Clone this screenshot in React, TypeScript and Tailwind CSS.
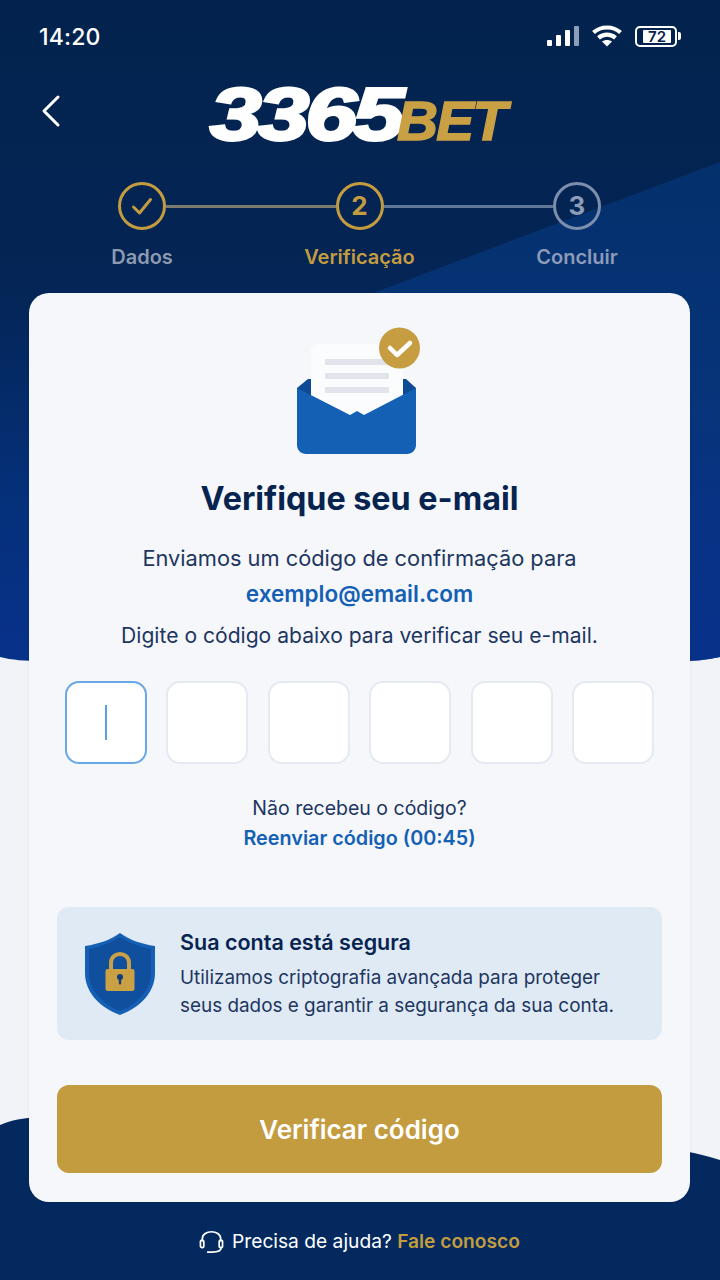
import React from "react";

function Background() {
  return (
    <svg className="absolute inset-0" width="720" height="1280" viewBox="0 0 720 1280">
      <defs>
        <linearGradient id="topg" x1="0" y1="0" x2="0" y2="1">
          <stop offset="0" stopColor="#03234e" />
          <stop offset="0.42" stopColor="#042555" />
          <stop offset="0.76" stopColor="#05307a" />
          <stop offset="1" stopColor="#08318a" />
        </linearGradient>
        <linearGradient id="trig" gradientUnits="userSpaceOnUse" x1="0" y1="162" x2="0" y2="661">
          <stop offset="0" stopColor="#04306c" />
          <stop offset="0.5" stopColor="#07347a" />
          <stop offset="0.68" stopColor="#083283" />
          <stop offset="1" stopColor="#08328a" />
        </linearGradient>
      </defs>
      <path d="M0 0H720V657C705 660 695 661 680 661H40C25 661 12 660 0 657Z" fill="url(#topg)" />
      <path d="M720 162V657C705 660 695 661 680 661H100V400L376 292Z" fill="url(#trig)" />
      <path d="M0 1125C12 1120 22 1118 40 1117H660V1149C675 1149 695 1152 720 1160V1280H0Z" fill="#03295f" />
    </svg>
  );
}

function Signal() {
  return (
    <svg width="32" height="22" viewBox="0 0 32 22">
      <rect x="0" y="15" width="5" height="6" rx="1" fill="#fff" />
      <rect x="9" y="10" width="5" height="11" rx="1" fill="#fff" />
      <rect x="18" y="5" width="5" height="16" rx="1" fill="#fff" />
      <rect x="27" y="1" width="5" height="20" rx="1" fill="#8c9db8" />
    </svg>
  );
}

function Wifi() {
  return (
    <svg width="30" height="22" viewBox="0 0 30 22" fill="none" stroke="#fff" strokeWidth="4.2">
      <path d="M1.500 7.500C9 0.800 21 0.800 28.500 7.500" />
      <path d="M6.500 12.800C11.500 8.500 18.500 8.500 23.500 12.800" />
      <path d="M15 21.500L10 16.500C13 14.500 17 14.500 20 16.500Z" fill="#fff" stroke="none" />
    </svg>
  );
}

function Battery() {
  return (
    <div className="flex items-center gap-[1px]">
      <div className="w-[42px] h-[21px] rounded-[5px] border-2 border-white p-[2px] flex">
        <div className="w-[28px] ml-[4px] h-full bg-white rounded-[1px] flex items-center justify-center text-[15px] font-semibold text-[#03234e] leading-none">
          72
        </div>
      </div>
      <div className="w-[3px] h-[8px] bg-white rounded-r-[2px]" />
    </div>
  );
}

function Step({ label, children, cls, textCls }: { label: string; children: React.ReactNode; cls: string; textCls: string }) {
  return (
    <div className="w-[48px] flex flex-col items-center relative">
      <div className={`w-[48px] h-[48px] rounded-full border-[3px] flex items-center justify-center ${cls}`}>{children}</div>
      <div className={`absolute top-[63px] whitespace-nowrap text-[20px] font-semibold leading-[24px] ${textCls}`}>{label}</div>
    </div>
  );
}

function EnvelopeIcon() {
  return (
    <svg width="126" height="130" viewBox="0 0 126 130" className="mr-[5px]">
      <path d="M3 61L14 52H112L122 61V80H3Z" fill="#0f4a94" />
      <rect x="17" y="17" width="92" height="90" rx="6" fill="#fbfcfe" />
      <rect x="31" y="32" width="64" height="6" rx="1" fill="#e1e4ea" />
      <rect x="31" y="46" width="64" height="6" rx="1" fill="#e1e4ea" />
      <rect x="31" y="60" width="64" height="6" rx="1" fill="#e1e4ea" />
      <path d="M3 61L56 88L63 84L70 88L122 61V118C122 123 118 127 113 127H12C7 127 3 123 3 118Z" fill="#1360b4" />
      <circle cx="105.500" cy="21" r="20.500" fill="#c79d42" />
      <path d="M96 21L103 28L116 16" fill="none" stroke="#fff" strokeWidth="4.500" strokeLinecap="round" strokeLinejoin="round" />
    </svg>
  );
}

function ShieldIcon() {
  return (
    <svg width="70" height="82" viewBox="0 0 70 82">
      <path d="M35 0C45 7 56 11 70 13V40C70 60 54 75 35 82C16 75 0 60 0 40V13C14 11 25 7 35 0Z" fill="#1560b4" />
      <path d="M35 4C45 10 55 14 66 16V40C66 58 51 72 35 78C19 72 4 58 4 40V16C15 14 25 10 35 4Z" fill="#0f4f9e" />
      <path d="M26 37V30C26 18 44 18 44 30V37" fill="none" stroke="#c9a044" strokeWidth="4" />
      <rect x="20.500" y="36" width="29" height="22" rx="2" fill="#c9a044" />
      <circle cx="35" cy="44" r="3" fill="#0f3d7e" />
      <rect x="33.800" y="44" width="2.400" height="7.500" rx="1" fill="#0f3d7e" />
    </svg>
  );
}

function Headset() {
  return (
    <svg width="25" height="26" viewBox="0 0 26 26" fill="none" stroke="#fff" strokeWidth="1.800" strokeLinecap="round">
      <path d="M3.500 13V10.500C3.500 1 22.500 1 22.500 10.500V13" />
      <rect x="1.500" y="12" width="3.500" height="8" rx="1.700" />
      <rect x="21" y="12" width="3.500" height="8" rx="1.700" />
      <path d="M23 20C23 23 20 24.500 14 24.500H9" />
    </svg>
  );
}

export default function App() {
  return (
    <div className="relative w-[720px] h-[1280px] overflow-hidden bg-[#f1f3f8] font-['Inter',sans-serif]">
      <Background />
      <div className="relative flex flex-col h-full">
        <div className="h-[72px] pl-[39px] pr-[40px] flex items-center justify-between text-white">
          <span className="text-[23px] font-medium tracking-[0.2px] mt-[2px]">14:20</span>
          <div className="flex items-center gap-[13px] mr-[-1px]">
            <Signal />
            <Wifi />
            <Battery />
          </div>
        </div>
        <div className="relative h-[80px] flex items-center justify-center">
          <svg className="absolute left-[40px] top-[22px]" width="22" height="34" viewBox="0 0 22 34" fill="none" stroke="#fff" strokeWidth="3" strokeLinecap="round" strokeLinejoin="round">
            <path d="M18 3L4 17L18 31" />
          </svg>
          <div className="flex items-baseline italic font-black font-['Liberation_Sans',sans-serif] leading-none mt-[5px]">
            <span className="inline-block w-[187px] origin-left scale-x-[1.25] text-[74px] tracking-[-3px] text-white [-webkit-text-stroke:3px_white]">3365</span>
            <span className="inline-block w-[113px] origin-left scale-x-[1.03] text-[55px] tracking-[-1.500px] text-[#c9a044] [-webkit-text-stroke:1.500px_#c9a044]">BET</span>
          </div>
        </div>
        <div className="mt-[30px] h-[111px] flex justify-center">
          <div className="flex items-start mr-[1px]">
            <Step label="Dados" cls="border-[#c49c40]" textCls="text-[#8d9bb0]">
              <svg width="24" height="24" viewBox="0 0 24 24" fill="none" stroke="#c49c40" strokeWidth="3" strokeLinecap="round" strokeLinejoin="round">
                <path d="M3.500 13L9.500 19L20.500 5.500" />
              </svg>
            </Step>
            <div className="w-[169.500px] h-[3px] mt-[22.500px] bg-[#7a7a70]" />
            <Step label="Verificação" cls="border-[#c49c40]" textCls="text-[#c49c40]">
              <span className="text-[26px] font-bold text-[#c49c40] leading-none">2</span>
            </Step>
            <div className="w-[169.500px] h-[3px] mt-[22.500px] bg-[#5f7697]" />
            <Step label="Concluir" cls="border-[#7b8fac]" textCls="text-[#8d9bb8]">
              <span className="text-[26px] font-bold text-[#8d9db8] leading-none">3</span>
            </Step>
          </div>
        </div>
        <div className="ml-[29px] mr-[30px] h-[909px] bg-[#f5f7fb] rounded-[20px] shadow-[0_1px_3px_rgba(0,0,0,0.08)] pt-[34px] flex flex-col items-center">
          <EnvelopeIcon />
          <h1 className="mt-[22px] text-[32.300px] leading-[40px] font-bold text-[#06244f] whitespace-nowrap">Verifique seu e-mail</h1>
          <div className="mt-[21px] leading-[36px] text-[#1d365f] text-center whitespace-nowrap">
            <p className="text-[21.800px]">Enviamos um código de confirmação para</p>
            <p className="text-[22.500px] font-semibold text-[#1360b4]">exemplo@email.com</p>
            <p className="mt-[6px] text-[21.100px]">Digite o código abaixo para verificar seu e-mail.</p>
          </div>
          <div className="mt-[27px] flex gap-[19.400px] self-start ml-[36px]">
            <div className="w-[82px] h-[83px] rounded-[14px] bg-white border-2 border-[#69a8e6] flex items-center justify-center">
              <div className="w-[2.500px] h-[35px] bg-[#5d9fdf]" />
            </div>
            {[0, 1, 2, 3, 4].map((i) => (
              <div key={i} className="w-[82px] h-[83px] rounded-[14px] bg-white border-2 border-[#e5e9f2]" />
            ))}
          </div>
          <p className="mt-[29px] text-[19.500px] leading-[30px] text-[#1d365f] text-center">Não recebeu o código?</p>
          <p className="text-[19.800px] leading-[30px] font-semibold text-[#1360b4] text-center">Reenviar código (00:45)</p>
          <div className="mt-[54px] w-[605px] h-[133px] rounded-[12px] bg-[#e0eaf5] flex items-center pl-[28px] gap-[25px]">
            <ShieldIcon />
            <div className="mt-[1px]">
              <div className="text-[21.500px] leading-[28px] font-semibold text-[#06244f] mt-[-1px]">Sua conta está segura</div>
              <div className="mt-[8px] text-[18.900px] leading-[28px] text-[#1d365f] whitespace-nowrap">
                Utilizamos criptografia avançada para proteger
                <br />
                seus dados e garantir a segurança da sua conta.
              </div>
            </div>
          </div>
          <button className="mt-[45px] w-[605px] h-[88px] rounded-[12px] bg-[#c49c40] text-white text-[26px] font-semibold">
            Verificar código
          </button>
        </div>
        <div className="mt-[24px] flex items-center justify-center gap-[8px] text-[19.200px] leading-[30px] mr-[1px]">
          <Headset />
          <span className="text-white">
            Precisa de ajuda? <span className="font-semibold text-[#c49c40]">Fale conosco</span>
          </span>
        </div>
      </div>
    </div>
  );
}
